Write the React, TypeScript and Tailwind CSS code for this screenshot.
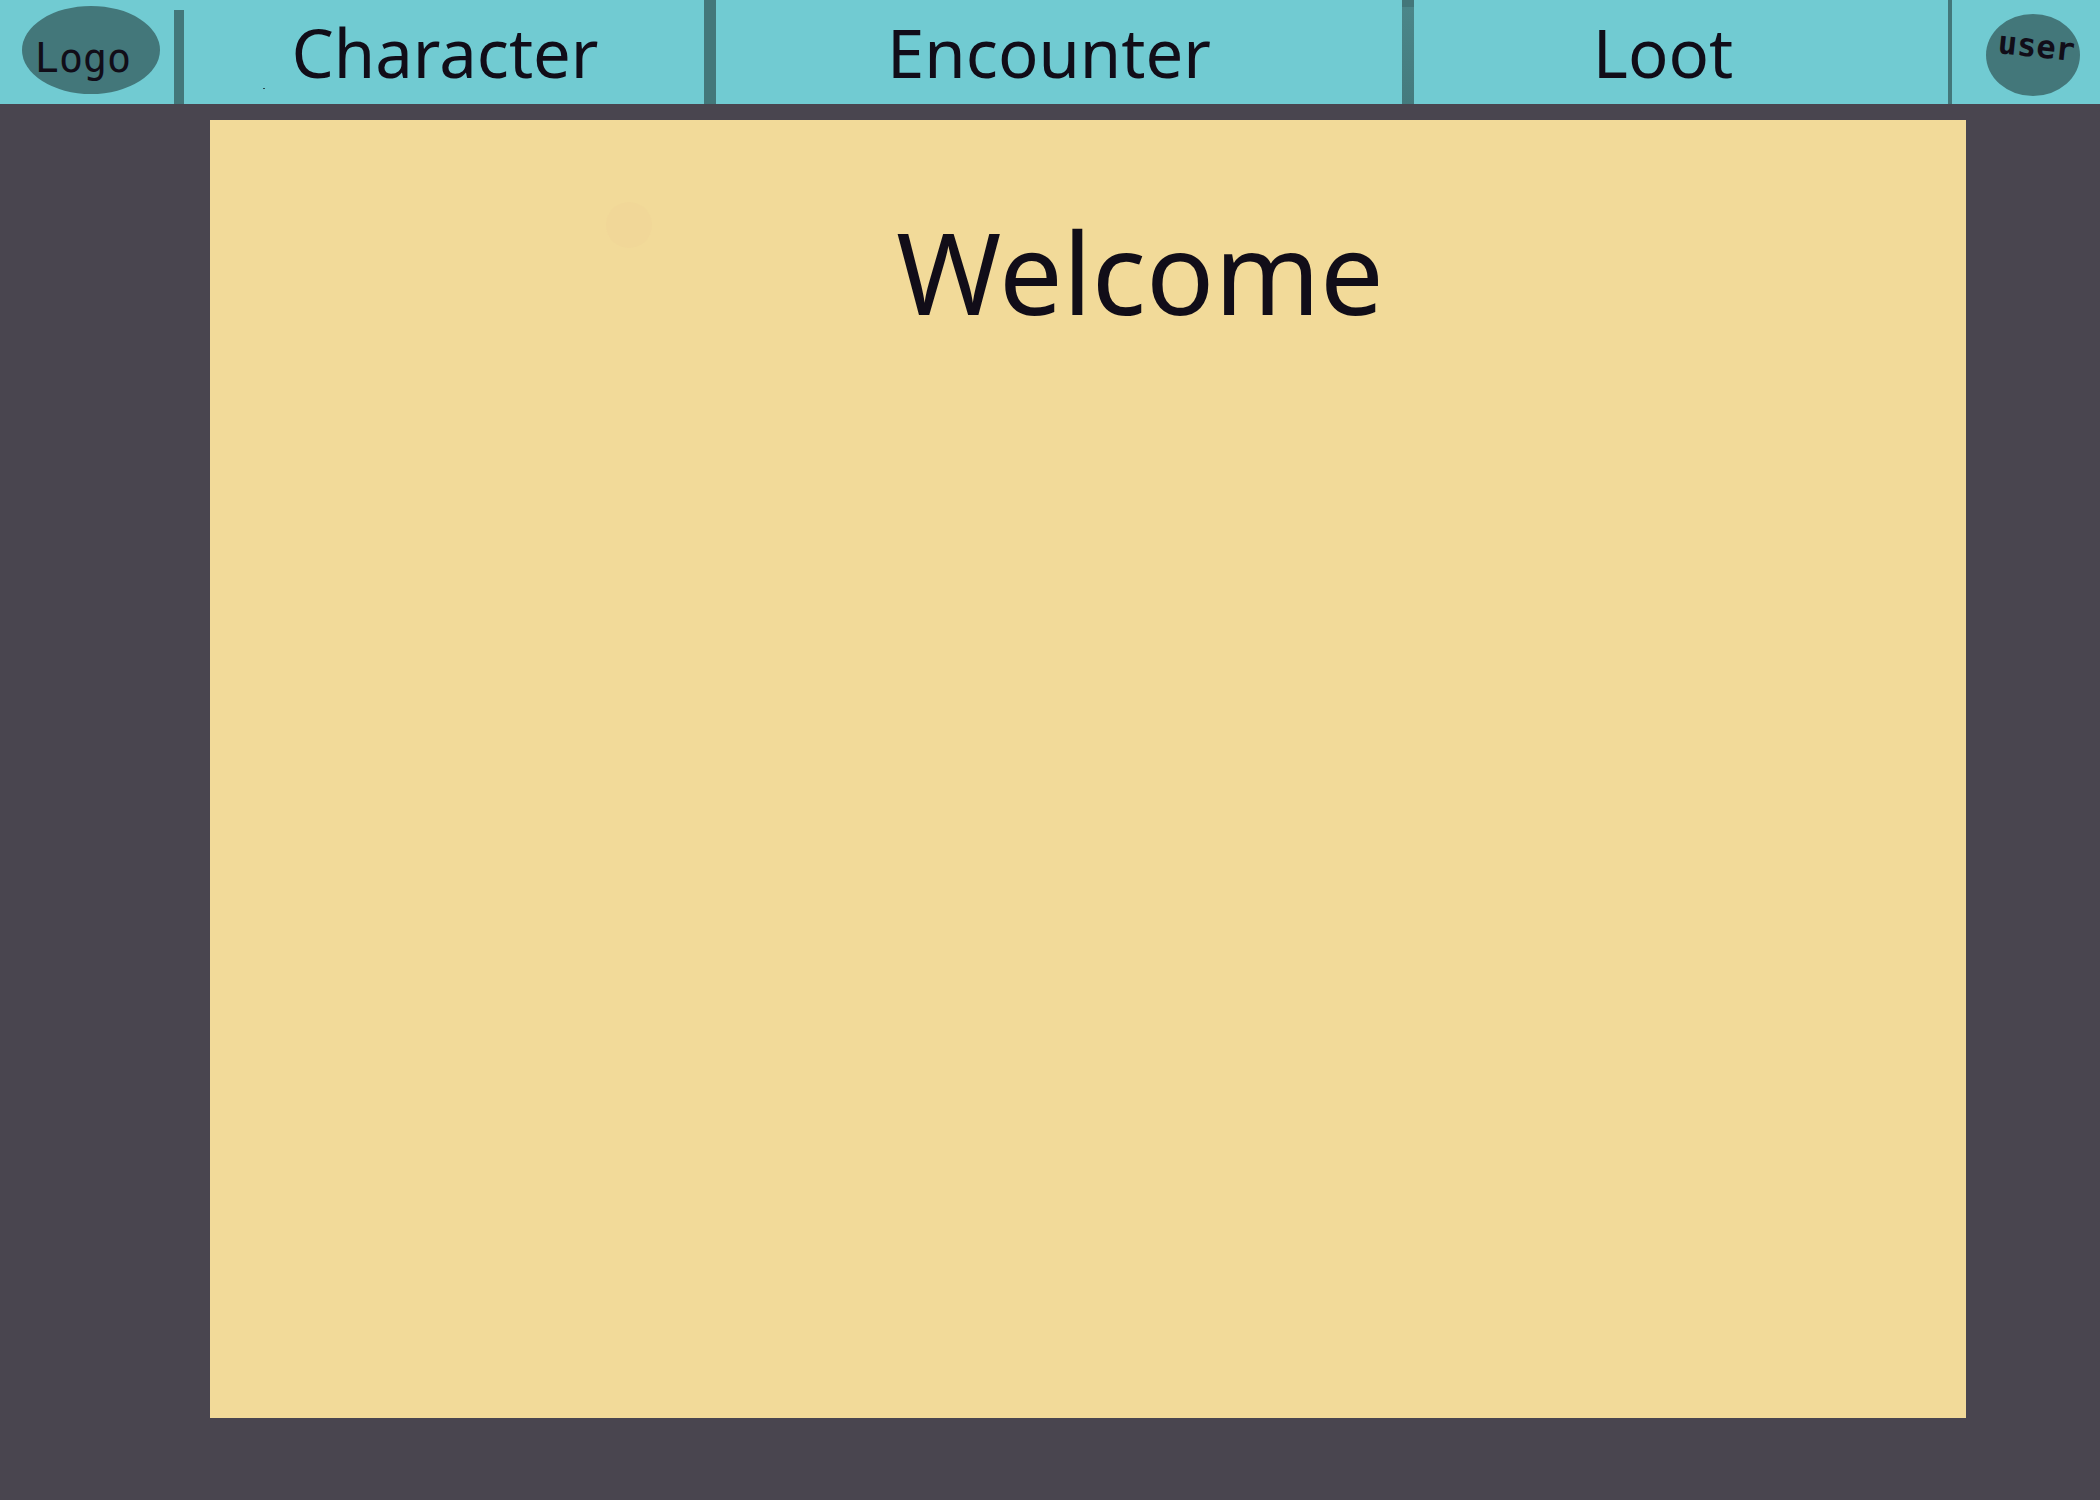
const tab =
  "flex h-full items-center justify-center text-[67px] leading-none text-[#110d18]";

export default function App() {
  return (
    <div className="flex min-h-screen flex-col bg-[#49454f] font-['Noto_Sans',sans-serif] text-[#110d18]">
      <header className="h-[104px] bg-[#71cbd2]">
        <nav aria-label="Main" className="flex h-full">
          <div className="flex w-[174px] shrink-0 items-start pt-[6px] pl-[22px]">
            <a
              href="#home"
              className="flex h-[88px] w-[138px] items-center justify-center rounded-[50%] bg-[#43777a] pt-4 pr-4 font-['DejaVu_Sans_Mono',monospace] text-[40px] leading-none"
            >
              Logo
            </a>
          </div>
          <div className="mt-[10px] w-[10px] shrink-0 bg-[#43777a]" />
          <div className="relative flex-[520]">
            <a href="#character" className={`${tab} pl-0.5`}>
              Character
            </a>
            <span className="absolute bottom-[15px] left-[79px] h-px w-[2px] bg-[#2b4a50]" />
          </div>
          <div className="w-[12px] shrink-0 bg-[#43777a]" />
          <div className="flex-[686]">
            <a href="#encounter" className={`${tab} pr-5`}>
              Encounter
            </a>
          </div>
          <div className="w-[12px] shrink-0 border-t-[7px] border-[#43777a] bg-linear-to-b from-[#4b8689] to-[#447a7d]" />
          <div className="flex-[534]">
            <a href="#loot" className={`${tab} pr-9`}>
              Loot
            </a>
          </div>
          <div className="w-[4px] shrink-0 bg-[#43777a]" />
          <div className="flex w-[148px] shrink-0 items-start justify-end pt-[14px] pr-5">
            <button
              type="button"
              className="flex h-[82px] w-[94px] items-start justify-center rounded-[50%] bg-[#43777a] pt-4 pl-2 font-['DejaVu_Sans_Mono',monospace] text-[32px] leading-none font-bold"
            >
              <span className="rotate-6">user</span>
            </button>
          </div>
        </nav>
      </header>

      <main className="relative mt-4 mr-[134px] mb-[82px] ml-[210px] flex-1 bg-[#f2da99]">
        <span className="absolute top-[82px] left-[396px] size-[46px] rounded-full bg-[#f1d798]" />
        <h1 className="pt-[91px] pl-[104px] text-center text-[113px] leading-[120px]">
          Welcome
        </h1>
      </main>
    </div>
  );
}
